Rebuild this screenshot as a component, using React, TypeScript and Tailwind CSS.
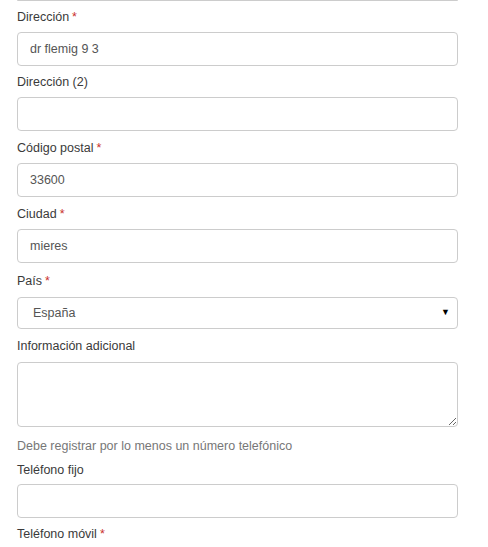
import { useState } from 'react';

const font = { fontFamily: '"Liberation Sans", Arial, sans-serif' };

function Label({ text, required, h }: { text: string; required?: boolean; h: string }) {
  return (
    <label className={`flex items-center pt-[2px] text-[12.5px] text-[#3a3a3a] ${h}`}>
      {text}
      {required && <span className="ml-[3px] text-[#c9302c]">*</span>}
    </label>
  );
}

function Field({ value, onChange }: { value: string; onChange: (v: string) => void }) {
  return (
    <input
      type="text"
      value={value}
      onChange={(e) => onChange(e.target.value)}
      className="block h-[34px] w-full rounded-[4px] border border-[#ccc] bg-white px-[12px] text-[12.5px] text-[#555] outline-none"
    />
  );
}

export default function App() {
  const [form, setForm] = useState({
    dir: 'dr flemig 9 3',
    dir2: '',
    cp: '33600',
    ciudad: 'mieres',
    pais: 'España',
    info: '',
    fijo: '',
  });
  const set = (k: keyof typeof form) => (v: string) => setForm({ ...form, [k]: v });

  return (
    <div className="h-[547px] w-[488px] overflow-hidden bg-white" style={font}>
      <div className="ml-[17px] w-[441px]">
        {/* bottom edge of the previous field */}
        <div className="h-[1px] rounded-b-[4px] border-b border-[#ccc]" />

        <Label text="Dirección" required h="h-[31px]" />
        <Field value={form.dir} onChange={set('dir')} />

        <Label text="Dirección (2)" h="h-[31px]" />
        <Field value={form.dir2} onChange={set('dir2')} />

        <Label text="Código postal" required h="h-[32px]" />
        <Field value={form.cp} onChange={set('cp')} />

        <Label text="Ciudad" required h="h-[32px]" />
        <Field value={form.ciudad} onChange={set('ciudad')} />

        <Label text="País" required h="h-[34px]" />
        <div className="relative">
          <select
            value={form.pais}
            onChange={(e) => set('pais')(e.target.value)}
            className="block h-[32px] w-full appearance-none rounded-[4px] border border-[#ccc] bg-white pl-[15px] text-[12.5px] text-[#555] outline-none"
          >
            <option>España</option>
            <option>Portugal</option>
            <option>Francia</option>
          </select>
          <span className="pointer-events-none absolute right-[8px] top-[11px] text-[9px] leading-none text-black">▼</span>
        </div>

        <Label text="Información adicional" h="h-[33px]" />
        <textarea
          value={form.info}
          onChange={(e) => set('info')(e.target.value)}
          className="block h-[65px] w-full rounded-[4px] border border-[#ccc] bg-white px-[12px] py-[6px] text-[12.5px] text-[#555] outline-none"
        />

        <p className="mt-[11px] h-[16px] text-[12.5px] leading-[16px] text-[#777]">
          Debe registrar por lo menos un número telefónico
        </p>

        <Label text="Teléfono fijo" h="h-[30px]" />
        <Field value={form.fijo} onChange={set('fijo')} />

        <Label text="Teléfono móvil" required h="h-[31px]" />
      </div>
    </div>
  );
}
